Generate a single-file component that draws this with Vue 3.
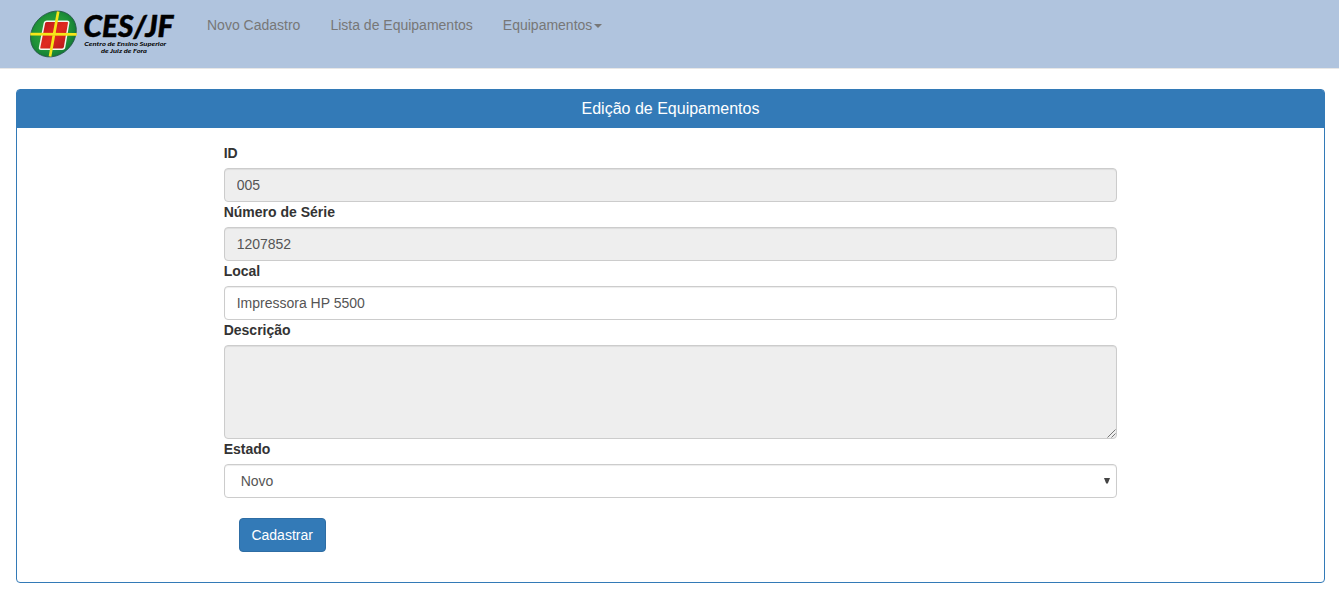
<script setup>
import { ref } from 'vue'

const links = [
  { text: 'Novo Cadastro' },
  { text: 'Lista de Equipamentos' },
  { text: 'Equipamentos', caret: true },
]
const id = ref('005')
const serial = ref('1207852')
const place = ref('Impressora HP 5500')
const description = ref('')
</script>

<template>
  <nav class="navbar">
    <a class="brand">
      <svg width="150" height="50" viewBox="28 9 150 50">
        <defs>
          <radialGradient id="green" cx="0.5" cy="0.45" r="0.55">
            <stop offset="0" stop-color="#3aa83c" />
            <stop offset="0.7" stop-color="#209438" />
            <stop offset="1" stop-color="#137a35" />
          </radialGradient>
          <linearGradient id="red" x1="0" y1="0" x2="1" y2="1">
            <stop offset="0" stop-color="#b91418" />
            <stop offset="0.5" stop-color="#e02a20" />
            <stop offset="1" stop-color="#b01519" />
          </linearGradient>
        </defs>
        <ellipse cx="53.4" cy="34" rx="24.8" ry="20.9" transform="rotate(-45 53.4 34)" fill="url(#green)" stroke="#245346" stroke-width="0.8" />
        <path d="M47 21.2H67.2Q69 21.2 68.7 23L64.6 47.2Q64.2 49.3 62.2 49.3H41Q39.2 49.3 39.6 47.3L44.4 23.2Q44.8 21.2 47 21.2Z" fill="url(#red)" stroke="#f4f8f0" stroke-width="1.5" />
        <path d="M58.2 11.6L50 56.6M30.3 34.2L76.7 34.4" stroke="#f6e619" stroke-width="2.7" />
        <text class="logo-name" x="83.5" y="36.9" textLength="90" lengthAdjust="spacingAndGlyphs">CES/JF</text>
        <text class="logo-sub" x="84.3" y="46.2" textLength="82" lengthAdjust="spacingAndGlyphs">Centro de Ensino Superior</text>
        <text class="logo-sub" x="101" y="53" textLength="46" lengthAdjust="spacingAndGlyphs">de Juiz de Fora</text>
      </svg>
    </a>
    <ul class="links">
      <li v-for="link in links" :key="link.text">
        {{ link.text }}<b v-if="link.caret" class="caret"></b>
      </li>
    </ul>
  </nav>

  <section class="panel">
    <header class="panel-heading">Edição de Equipamentos</header>
    <form class="panel-body" @submit.prevent>
      <label>ID</label>
      <input v-model="id" class="control locked" readonly />
      <label>Número de Série</label>
      <input v-model="serial" class="control locked" readonly />
      <label>Local</label>
      <input v-model="place" class="control" />
      <label>Descrição</label>
      <div class="area">
        <textarea v-model="description" class="control locked" readonly></textarea>
        <svg class="grip" width="9" height="9" viewBox="0 0 9 9">
          <path d="M0.5 8.5L8.5 0.5M4.5 8.5L8.5 4.5" stroke="#555" stroke-width="0.8" />
        </svg>
      </div>
      <label>Estado</label>
      <div class="control select">
        <span>Novo</span>
        <svg width="6" height="6" viewBox="0 0 6 6"><path d="M0 0H6L3.8 5.5H2.2Z" fill="#444" /></svg>
      </div>
      <button class="submit">Cadastrar</button>
    </form>
  </section>
</template>

<style>
body {
  margin: 0;
  background: #fff;
}
</style>

<style scoped>
.navbar,
.panel {
  font-family: "Liberation Sans", Arial, sans-serif;
  font-size: 14px;
  line-height: 20px;
  color: #333;
  box-sizing: border-box;
}
.navbar {
  display: flex;
  align-items: flex-start;
  height: 69px;
  padding-left: 28px;
  background: #b0c4de;
  border-bottom: 1px solid #e7e7e7;
}
.brand {
  width: 150px;
  height: 50px;
  margin-top: 9px;
}
.brand svg {
  display: block;
  overflow: visible;
}
.logo-name {
  font: italic 900 29.5px Lato, sans-serif;
  stroke: #000;
  stroke-width: 0.5px;
}
.logo-sub {
  font: italic 700 6.2px Lato, sans-serif;
}
.links {
  display: flex;
  gap: 30px;
  list-style: none;
  margin: 0 0 0 29px;
  padding: 15px 0;
  color: #777;
}
.links li {
  white-space: nowrap;
}
.caret {
  display: inline-block;
  margin-left: 2px;
  vertical-align: middle;
  border-top: 4px solid #777;
  border-left: 4px solid transparent;
  border-right: 4px solid transparent;
}
.panel {
  width: 1309px;
  height: 494px;
  margin: 20px 0 0 16px;
  border: 1px solid #337ab7;
  border-radius: 4px;
}
.panel-heading {
  height: 38px;
  box-sizing: border-box;
  padding-top: 10px;
  background: #337ab7;
  color: #fff;
  font-size: 16px;
  line-height: 18px;
  text-align: center;
  border-radius: 2px 2px 0 0;
}
.panel-body {
  display: flex;
  flex-direction: column;
  width: 893px;
  margin-left: 206.67px;
  padding-top: 15px;
}
label {
  font-weight: 700;
  margin-bottom: 5px;
}
.control {
  display: block;
  box-sizing: border-box;
  width: 100%;
  height: 34px;
  margin: 0;
  padding: 6px 12px;
  border: 1px solid #ccc;
  border-radius: 4px;
  background: #fff;
  box-shadow: inset 0 1px 1px rgba(0, 0, 0, 0.075);
  color: #555;
  font: inherit;
  outline: none;
}
.locked {
  background: #eee;
}
.area {
  position: relative;
  height: 94px;
}
.area textarea {
  height: 94px;
  resize: none;
}
.grip {
  position: absolute;
  right: 1px;
  bottom: 1px;
}
.select {
  display: flex;
  justify-content: space-between;
  padding: 6px 6px 6px 16px;
}
.select svg {
  margin-top: 7px;
}
.submit {
  align-self: flex-start;
  width: 87px;
  height: 34px;
  margin: 20px 0 0 15px;
  padding: 6px 0;
  border: 1px solid #2e6da4;
  border-radius: 4px;
  background: #337ab7;
  color: #fff;
  font: inherit;
}
</style>
